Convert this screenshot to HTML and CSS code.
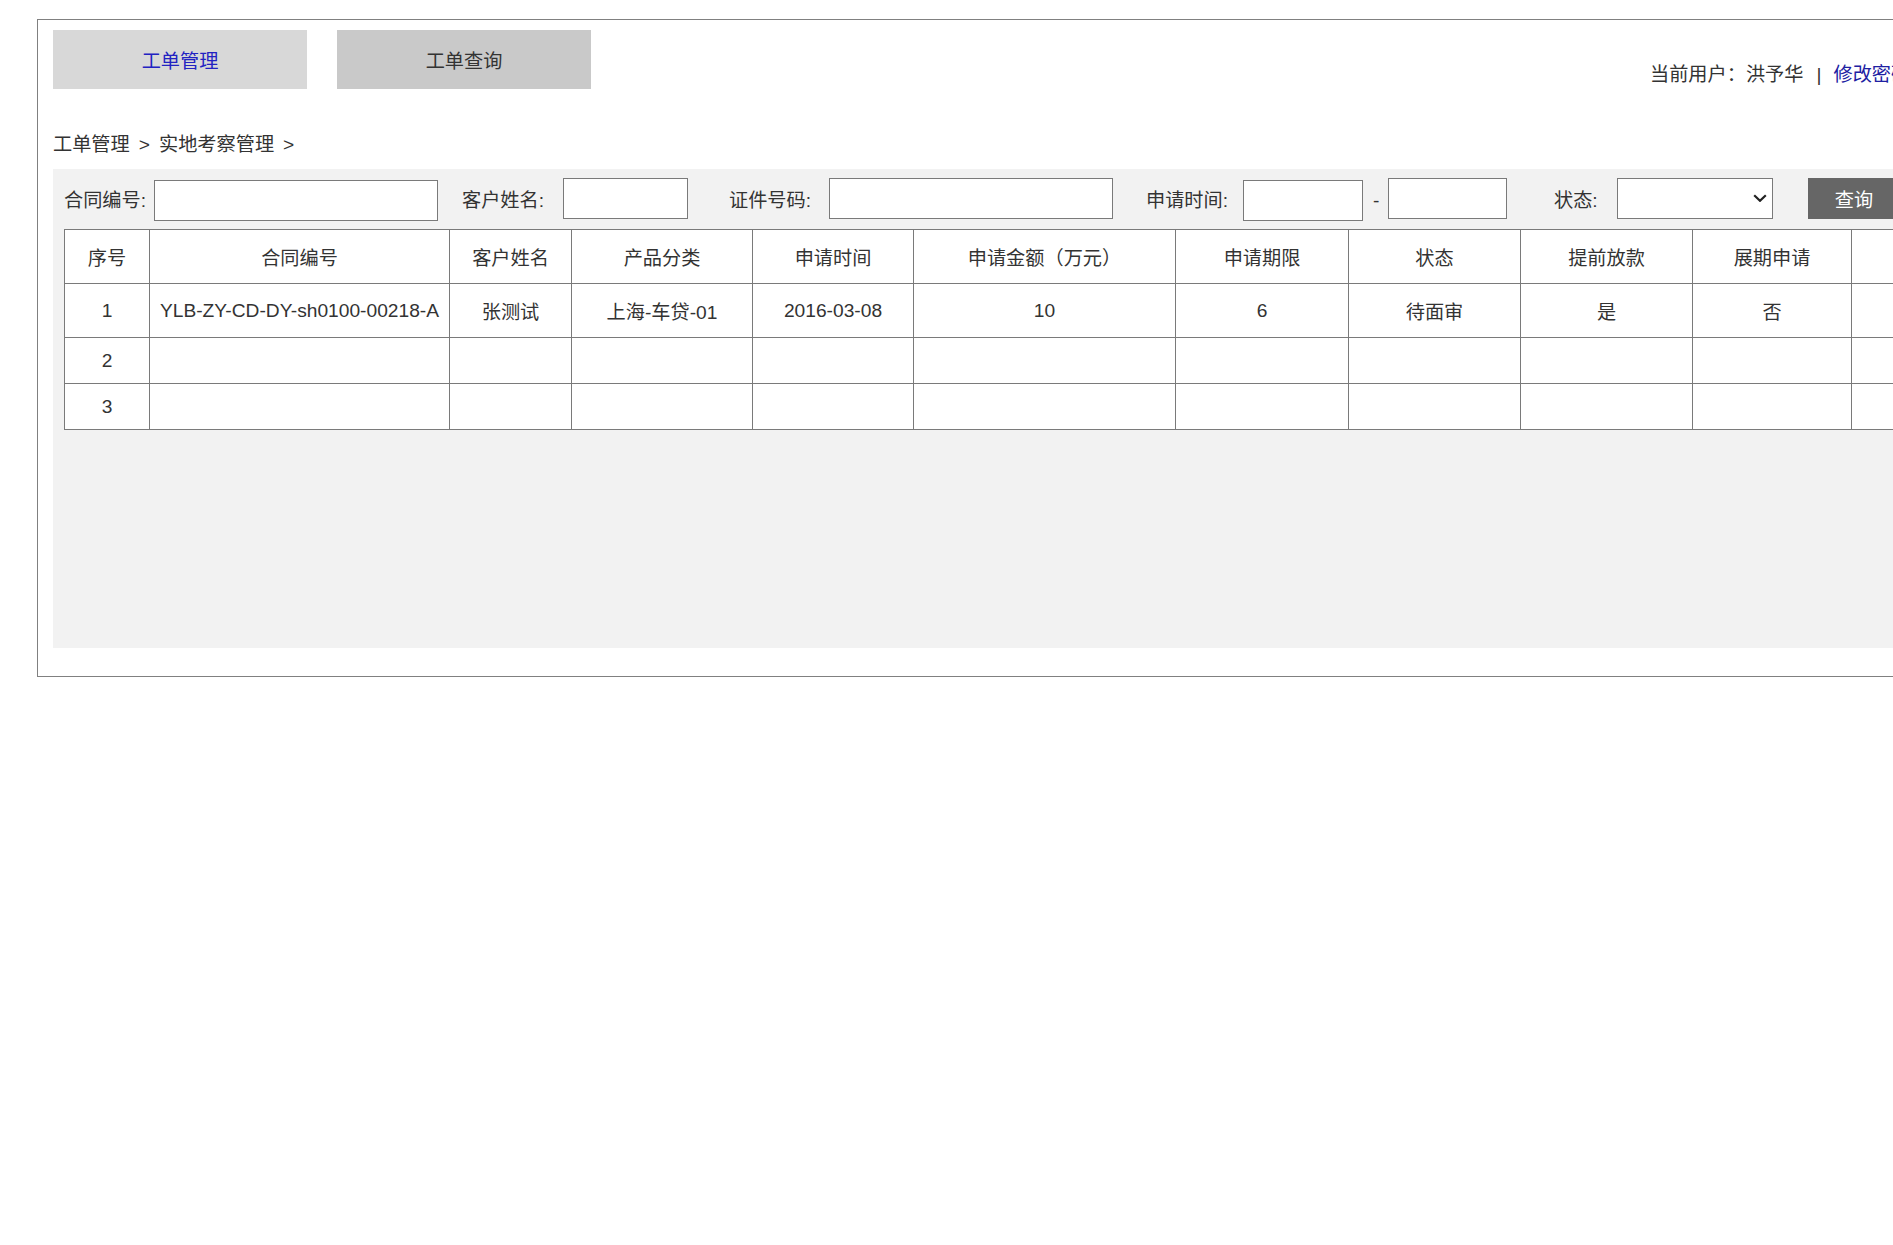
FILE: index.html
```html
<!DOCTYPE html>
<html lang="zh-CN">
  <head>
    <meta charset="UTF-8" />
    <meta name="viewport" content="width=device-width, initial-scale=1.0" />
    <title>实地考察管理</title>
    <link rel="stylesheet" href="styles.css">
  </head>
  <body>
    <div class="page">
      <div class="header">
        <div class="tabs">
          <a class="tab active" href="#">工单管理</a>
          <a class="tab" href="#">工单查询</a>
        </div>
        <div class="user-info">
          当前用户：洪予华<span class="divider">|</span><a class="user-link" href="#">修改密码</a>
        </div>
      </div>

      <div class="breadcrumb">
        <span>工单管理</span><span class="sep">&gt;</span><span>实地考察管理</span><span class="sep">&gt;</span>
      </div>

      <div class="panel">
        <form class="filter" onsubmit="return false">
          <label class="filter-label lbl-contract">合同编号:</label>
          <input class="filter-input input-wide input-low" type="text" />

          <label class="filter-label lbl-name">客户姓名:</label>
          <input class="filter-input input-name" type="text" />

          <label class="filter-label lbl-idcard">证件号码:</label>
          <input class="filter-input input-wide" type="text" />

          <label class="filter-label lbl-date">申请时间:</label>
          <input class="filter-input input-date input-low" type="text" />
          <span class="range-dash">-</span>
          <input class="filter-input input-date-end" type="text" />

          <label class="filter-label lbl-status">状态:</label>
          <div class="select-box">
            <select class="filter-select">
              <option value=""></option>
              <option value="1">待面审</option>
              <option value="2">已面审</option>
            </select>
            <svg class="select-arrow" width="14" height="8" viewBox="0 0 14 8">
              <path d="M1.2 1.2 L7 6.8 L12.8 1.2" fill="none" stroke="#222" stroke-width="2.2" />
            </svg>
          </div>

          <button class="query-button" type="submit">查询</button>
        </form>

        <table class="grid">
          <colgroup>
            <col class="col-no" />
            <col class="col-contract" />
            <col class="col-name" />
            <col class="col-product" />
            <col class="col-date" />
            <col class="col-amount" />
            <col class="col-term" />
            <col class="col-status" />
            <col class="col-early" />
            <col class="col-extend" />
            <col class="col-action" />
          </colgroup>
          <tr class="row-head">
            <td>序号</td>
            <td>合同编号</td>
            <td>客户姓名</td>
            <td>产品分类</td>
            <td>申请时间</td>
            <td>申请金额（万元）</td>
            <td>申请期限</td>
            <td>状态</td>
            <td>提前放款</td>
            <td>展期申请</td>
            <td></td>
          </tr>
          <tr class="row-data">
            <td>1</td>
            <td>YLB-ZY-CD-DY-sh0100-00218-A</td>
            <td>张测试</td>
            <td>上海-车贷-01</td>
            <td>2016-03-08</td>
            <td>10</td>
            <td>6</td>
            <td>待面审</td>
            <td>是</td>
            <td>否</td>
            <td></td>
          </tr>
          <tr class="row-empty">
            <td>2</td>
            <td></td><td></td><td></td><td></td><td></td>
            <td></td><td></td><td></td><td></td><td></td>
          </tr>
          <tr class="row-empty">
            <td>3</td>
            <td></td><td></td><td></td><td></td><td></td>
            <td></td><td></td><td></td><td></td><td></td>
          </tr>
        </table>
      </div>
    </div>
  </body>
</html>
```

FILE: styles.css
```css
html {
  overflow-x: hidden;
}

body {
  margin: 0;
  font-family: "Liberation Sans", "Noto Sans CJK SC", sans-serif;
  font-size: 19.2px;
  color: #333;
  background-color: #fff;
}

.page {
  width: 1969px;
  margin: 19px 0 0 37px;
  padding: 10px 15px 28px;
  border: 1px solid #808080;
}

/* top bar: tabs on the left, current user on the right */
.header {
  display: flex;
  height: 59px;
}

.tabs {
  display: flex;
  gap: 30px;
}

.tab {
  display: flex;
  align-items: center;
  justify-content: center;
  width: 254px;
  height: 59px;
  background-color: #c9c9c9;
  color: #333;
  text-decoration: none;
}

.tab.active {
  background-color: #d8d8d8;
  color: #2222c2;
}

.user-info {
  margin-left: auto;
  width: 372px;
  align-self: flex-end;
  margin-bottom: 1px;
  line-height: 26px;
  white-space: nowrap;
}

.divider {
  margin: 0 12px 0 13px;
}

.user-link {
  color: #2020a2;
  text-decoration: none;
}

.breadcrumb {
  margin: 43px 0 11px;
  line-height: 26px;
  height: 26px;
}

.breadcrumb .sep {
  padding: 0 9px;
}

/* grey search area */
.panel {
  box-sizing: border-box;
  height: 479px;
  padding: 9px 11px 0;
  background-color: #f2f2f2;
}

.filter {
  display: flex;
  align-items: flex-start;
  height: 43px;
  margin: 0;
}

.filter-label {
  flex: none;
  margin-top: 2px;
  line-height: 41px;
  white-space: nowrap;
}

.lbl-contract {
  width: 90px;
}

.lbl-name {
  width: 101px;
  margin-left: 24px;
}

.lbl-idcard {
  width: 100px;
  margin-left: 41px;
}

.lbl-date {
  width: 97px;
  margin-left: 33px;
}

.lbl-status {
  width: 63px;
  margin-left: 47px;
}

.filter-input {
  flex: none;
  box-sizing: border-box;
  height: 41px;
  margin: 0;
  padding: 0 5px;
  border: 1px solid #7a7a7a;
  background-color: #fff;
  font: inherit;
}

.input-low {
  margin-top: 2px;
}

.input-wide {
  width: 284px;
}

.input-name {
  width: 125px;
}

.input-date {
  width: 120px;
}

.input-date-end {
  width: 119px;
}

.range-dash {
  width: 6px;
  margin: 2px 9px 0 10px;
  line-height: 41px;
}

.select-box {
  position: relative;
  flex: none;
  width: 156px;
  height: 41px;
}

.filter-select {
  box-sizing: border-box;
  width: 100%;
  height: 100%;
  margin: 0;
  border: 1px solid #7a7a7a;
  background-color: #fff;
  font: inherit;
  appearance: none;
  -webkit-appearance: none;
}

.select-arrow {
  position: absolute;
  right: 6px;
  top: 16px;
  pointer-events: none;
}

.query-button {
  flex: none;
  width: 92px;
  height: 41px;
  margin-left: 35px;
  border: none;
  background-color: #666;
  color: #fff;
  font: inherit;
  cursor: pointer;
}

/* result table */
.grid {
  margin-top: 8px;
  width: 2015px;
  table-layout: fixed;
  border-collapse: collapse;
  background-color: #fff;
}

.grid td {
  padding: 0;
  border: 1px solid #7a7a7a;
  text-align: center;
  white-space: nowrap;
}

.row-head td,
.row-data td {
  height: 53px;
}

.row-empty td {
  height: 45px;
}

.col-no { width: 85px; }
.col-contract { width: 300px; }
.col-name { width: 122px; }
.col-product { width: 181px; }
.col-date { width: 161px; }
.col-amount { width: 262px; }
.col-term { width: 173px; }
.col-status { width: 172px; }
.col-early { width: 172px; }
.col-extend { width: 159px; }
.col-action { width: 228px; }
```
